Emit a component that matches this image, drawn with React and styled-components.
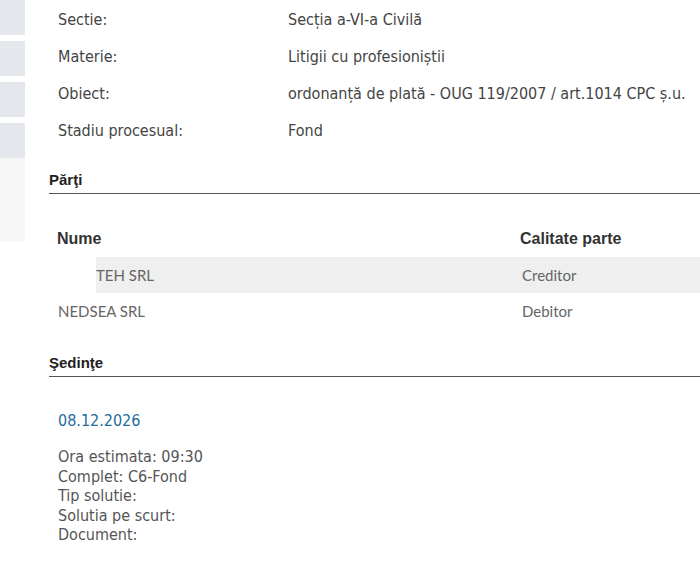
import React from "react";
import styled, { createGlobalStyle } from "styled-components";

const Global = createGlobalStyle`
  html, body { margin: 0; padding: 0; background: #fff; }
  body { width: 700px; height: 571px; overflow: hidden; }
`;

const Page = styled.div`
  display: flex;
  width: 700px;
  height: 571px;
  overflow: hidden;
`;

const Side = styled.div`
  width: 25px;
  flex: none;
  display: flex;
  flex-direction: column;
`;

const SideBlock = styled.div`
  height: ${(p) => p.h}px;
  margin-bottom: ${(p) => p.gap}px;
  background: #e4e7ec;
`;

const SideFade = styled.div`
  height: 84px;
  background: #f7f7f8;
`;

const Main = styled.div`
  flex: 1;
  padding-left: 24px;
  padding-top: 1px;
  display: flex;
  flex-direction: column;
`;

const InfoRow = styled.div`
  display: grid;
  grid-template-columns: 230px 1fr;
  height: 37px;
  align-items: center;
  padding-left: 9px;
  font-family: "DejaVu Sans Condensed", "DejaVu Sans", sans-serif;
  font-size: 16px;
  color: #444;
  white-space: nowrap;
`;

const SectionTitle = styled.div`
  margin-top: ${(p) => p.mt}px;
  font-family: "Liberation Sans", Arial, sans-serif;
  font-weight: bold;
  font-size: 15px;
  color: #222;
  padding-bottom: 5px;
  border-bottom: 1px solid #555;
  line-height: 17px;
`;

const TableHead = styled.div`
  display: grid;
  grid-template-columns: 463px 1fr;
  margin-top: 26px;
  height: 37px;
  align-items: center;
  padding-left: 8px;
  font-family: "Liberation Sans", Arial, sans-serif;
  font-weight: bold;
  font-size: 16px;
  color: #333;
`;

const TableRow = styled.div`
  display: grid;
  grid-template-columns: 473px 1fr;
  height: 36px;
  align-items: center;
  background: ${(p) => (p.shade ? "#efefef" : "#fff")};
  font-family: Lato, "Liberation Sans", sans-serif;
  font-size: 15px;
  color: #666;
`;

const NameCell = styled.div`
  display: flex;
  align-items: center;
  height: 100%;
  padding-left: ${(p) => (p.redacted ? 0 : 9)}px;
`;

const Redaction = styled.span`
  display: block;
  width: 47px;
  height: 100%;
  background: #fff;
`;

const Date = styled.div`
  margin-top: 34px;
  padding-left: 9px;
  font-family: "DejaVu Sans Condensed", "DejaVu Sans", sans-serif;
  font-size: 16px;
  color: #1f6c9e;
`;

const Details = styled.div`
  margin-top: 17px;
  padding-left: 9px;
  font-family: "DejaVu Sans Condensed", "DejaVu Sans", sans-serif;
  font-size: 16px;
  line-height: 19.5px;
  color: #555;
`;

const info = [
  ["Sectie:", "Secția a-VI-a Civilă"],
  ["Materie:", "Litigii cu profesioniștii"],
  ["Obiect:", "ordonanță de plată - OUG 119/2007 / art.1014 CPC ș.u."],
  ["Stadiu procesual:", "Fond"],
];

export default function App() {
  return (
    <>
      <Global />
      <Page>
        <Side>
          <SideBlock h={35} gap={6} />
          <SideBlock h={35} gap={6} />
          <SideBlock h={35} gap={6} />
          <SideBlock h={35} gap={0} />
          <SideFade />
        </Side>
        <Main>
          {info.map(([k, v]) => (
            <InfoRow key={k}>
              <span>{k}</span>
              <span>{v}</span>
            </InfoRow>
          ))}
          <SectionTitle mt={22}>Părţi</SectionTitle>
          <TableHead>
            <span>Nume</span>
            <span>Calitate parte</span>
          </TableHead>
          <TableRow shade>
            <NameCell redacted>
              <Redaction />
              TEH SRL
            </NameCell>
            <span>Creditor</span>
          </TableRow>
          <TableRow>
            <NameCell>NEDSEA SRL</NameCell>
            <span>Debitor</span>
          </TableRow>
          <SectionTitle mt={25}>Şedinţe</SectionTitle>
          <Date>08.12.2026</Date>
          <Details>
            <div>Ora estimata: 09:30</div>
            <div>Complet: C6-Fond</div>
            <div>Tip solutie:</div>
            <div>Solutia pe scurt:</div>
            <div>Document:</div>
          </Details>
        </Main>
      </Page>
    </>
  );
}
